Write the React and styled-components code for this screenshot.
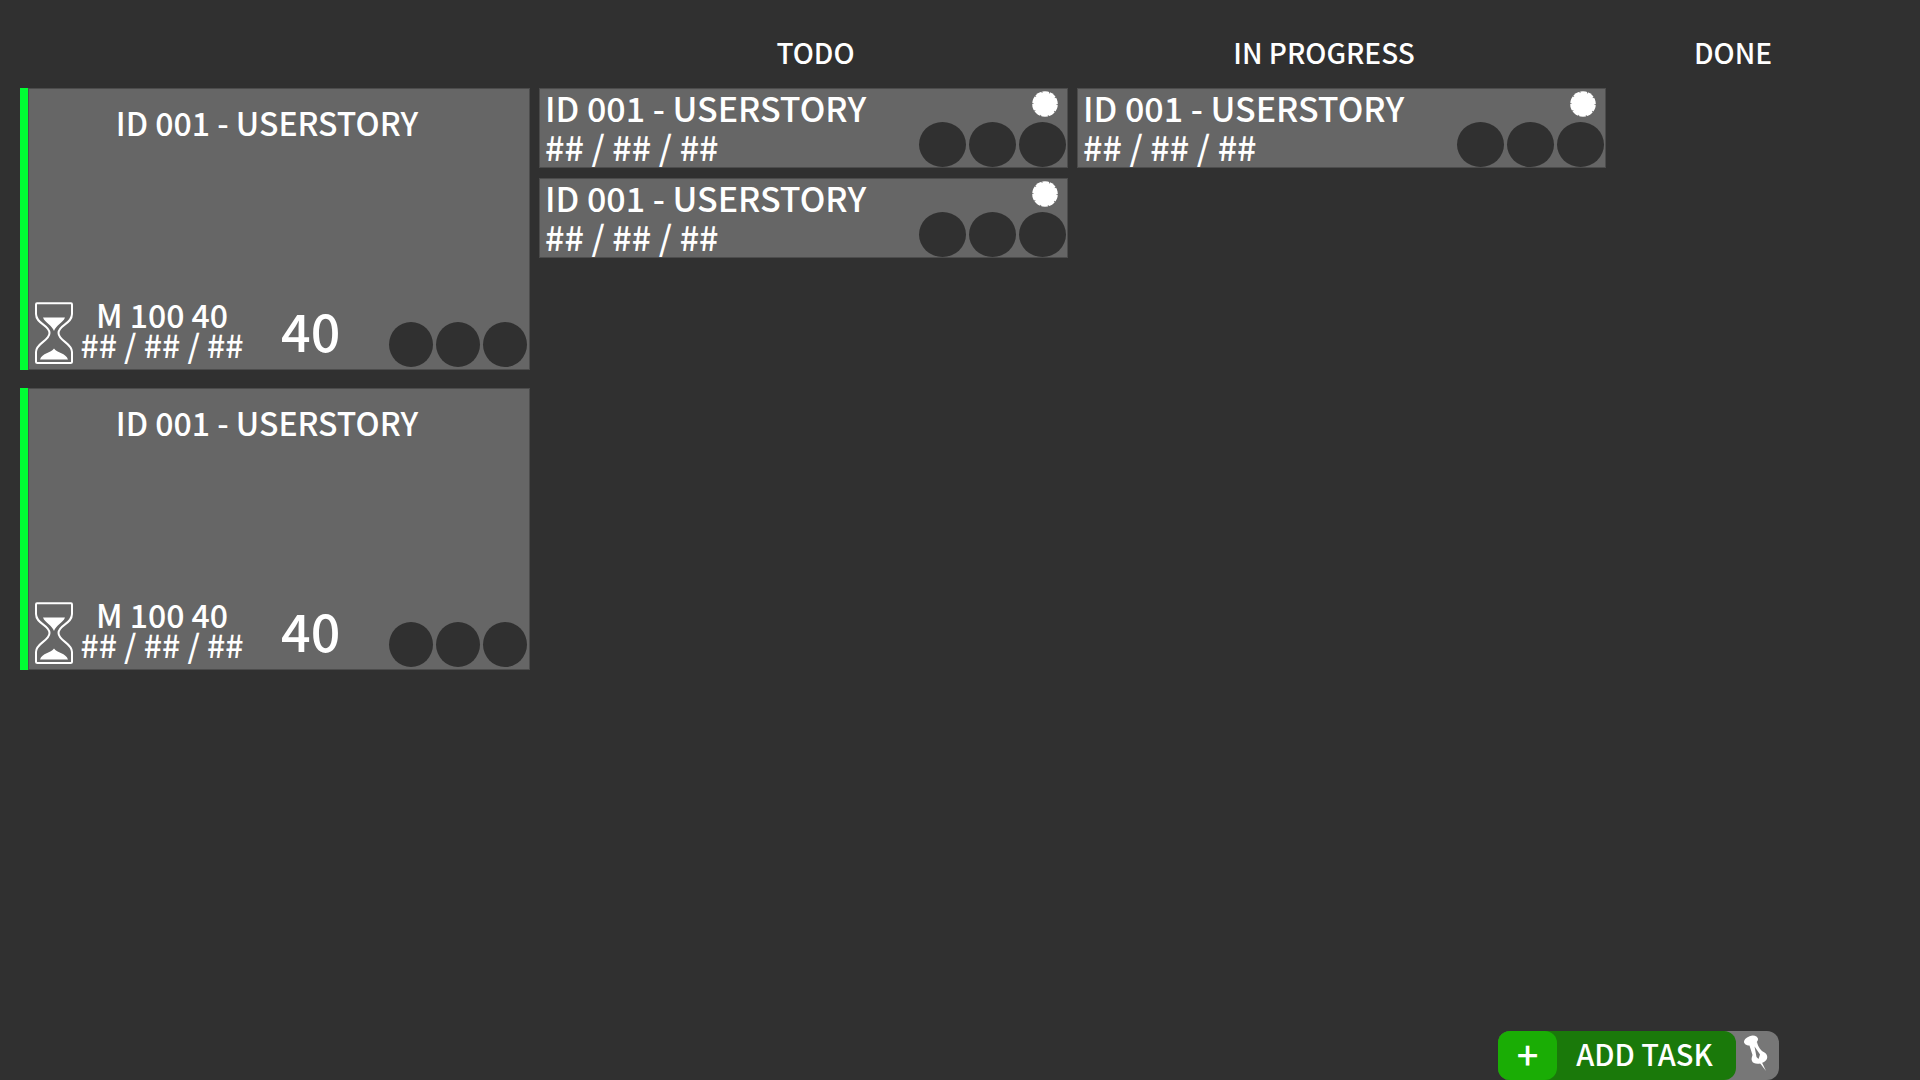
import React from "react";
import styled, { createGlobalStyle } from "styled-components";

const GlobalStyle = createGlobalStyle`
  *, *::before, *::after { box-sizing: border-box; }
  body {
    margin: 0;
    background: #303030;
    color: #fff;
    font-family: "Noto Sans CJK SC", "Open Sans", sans-serif;
    font-weight: 500;
  }
  h2, h3, p { margin: 0; font-size: inherit; font-weight: inherit; }
`;

const Page = styled.div`
  min-height: 100vh;
  display: flex;
  flex-direction: column;
`;

const BoardHeader = styled.header`
  display: grid;
  grid-template-columns: 538fr 555fr 462fr 356fr;
  height: 88px;
  padding: 32px 9px 0 0;
`;

const ColumnTitle = styled.h2`
  font-size: 28px;
  line-height: 40px;
  text-align: center;
`;

const Board = styled.main`
  flex: 1;
  display: grid;
  grid-template-columns: 510fr 529fr 529fr 305fr;
  column-gap: 9px;
  padding-left: 20px;
`;

const Column = styled.section`
  display: flex;
  flex-direction: column;
  gap: ${(p) => p.$gap}px;
`;

const StoryCard = styled.article`
  display: flex;
  flex-direction: column;
  justify-content: space-between;
  height: 282px;
  padding: 8px 3px 3px 7px;
  background: #666;
  border-left: 8px solid #00ff33;
  box-shadow: inset 0 0 0 1px #4c4c4c;
`;

const StoryTitle = styled.h3`
  padding-right: 28px;
  font-size: 32px;
  line-height: 52px;
  text-align: center;
`;

const StoryFooter = styled.div`
  display: flex;
  align-items: flex-end;
`;

const StoryIcon = styled.span`
  display: flex;
  padding-bottom: 3px;
`;

const StoryMeta = styled.div`
  width: 172px;
  margin-left: 3px;
  padding-bottom: 8px;
  font-size: 32px;
  line-height: 30px;
  text-align: center;
  white-space: nowrap;
`;

const Points = styled.p`
  flex: 1;
  padding: 0 0 3px 33px;
  font-size: 52px;
  line-height: 68px;
`;

const Avatars = styled.div`
  display: flex;
  gap: 3px;
`;

const Avatar = styled.span`
  width: ${(p) => p.$width}px;
  height: 45px;
  border-radius: 50%;
  background: #303030;
`;

const TaskCard = styled.article`
  display: flex;
  justify-content: space-between;
  height: 80px;
  padding: 0 2px 1px 6px;
  background: #666;
  box-shadow: inset 0 0 0 1px #4c4c4c;
`;

const TaskText = styled.div`
  font-size: 34px;
  line-height: 39px;
  white-space: nowrap;
`;

const TaskSide = styled.div`
  display: flex;
  flex-direction: column;
  align-items: flex-end;
  justify-content: space-between;
  padding-top: 3px;
`;

const StatusDot = styled.svg`
  width: 26px;
  height: 26px;
  margin-right: 8px;
`;

const Toolbar = styled.footer`
  display: flex;
  justify-content: flex-end;
  padding-right: 141px;
`;

const ToolbarGroup = styled.div`
  display: flex;
  height: 49px;
  border-radius: 12px;
  background: #777;
`;

const AddGroup = styled.div`
  display: flex;
  border-radius: 12px;
  background: #1a790a;
`;

const ToolButton = styled.button`
  display: flex;
  align-items: center;
  justify-content: center;
  width: ${(p) => p.$width}px;
  padding: 0 4px 6px 0;
  border: 0;
  border-radius: 12px;
  background: ${(p) => p.$color || "transparent"};
  color: #fff;
  font: inherit;
  font-size: 29px;
  line-height: 40px;
  cursor: pointer;
`;

const AddButton = styled(ToolButton)`
  padding: 0 0 4px;
  font-size: 38px;
`;

const Hourglass = () => (
  <svg width="38" height="62" viewBox="0 0 38 62" aria-hidden="true">
    <path
      d="M2 1.2H36Q37 1.2 37 2.4V12C37 22 23.5 23 23.5 31S37 41 37 50V59.5Q37 61 35.5 61H2.5Q1 61 1 59.5V50C1 41 14.500 39 14.500 31S1 22 1 12V2.400Q1 1.200 2 1.200Z"
      fill="none"
      stroke="#fff"
      strokeWidth="2"
    />
    <path d="M8 15.500H30C28 21 21 23 19 29C17 23 10 21 8 15.500Z" fill="#fff" />
    <path d="M5 57.500C7 51 16 51 19 46.500C22 51 31 51 33 57.500Z" fill="#fff" />
  </svg>
);

const Pin = () => (
  <svg width="26" height="40" viewBox="0 0 26 40" aria-hidden="true">
    <ellipse cx="8" cy="7.500" rx="7.200" ry="4.600" transform="rotate(-18 8 7.500)" fill="#fff" />
    <path d="M6 11L14 9C15 14 18 18 21.500 19.500C25.500 22 25 27 21 29C16 32 10 31 9 28C8 26 9 24 9.500 22Z" fill="#fff" />
    <path d="M11.500 13.500L17 21.500L15.500 26L13.500 24Z" fill="#777" />
    <path d="M16.500 29.500L18.500 28.500L23 38Z" fill="#fff" />
  </svg>
);

const STORIES = [
  { id: 1, title: "ID 001 - USERSTORY", size: "M 100 40", date: "## / ## / ##", points: 40 },
  { id: 2, title: "ID 001 - USERSTORY", size: "M 100 40", date: "## / ## / ##", points: 40 },
];

const TODO = [
  { id: 1, title: "ID 001 - USERSTORY", date: "## / ## / ##" },
  { id: 2, title: "ID 001 - USERSTORY", date: "## / ## / ##" },
];

const IN_PROGRESS = [{ id: 3, title: "ID 001 - USERSTORY", date: "## / ## / ##" }];

const AvatarRow = ({ width }) => (
  <Avatars>
    {[0, 1, 2].map((n) => (
      <Avatar key={n} $width={width} />
    ))}
  </Avatars>
);

const Story = ({ story }) => (
  <StoryCard>
    <StoryTitle>{story.title}</StoryTitle>
    <StoryFooter>
      <StoryIcon>
        <Hourglass />
      </StoryIcon>
      <StoryMeta>
        <p>{story.size}</p>
        <p>{story.date}</p>
      </StoryMeta>
      <Points>{story.points}</Points>
      <AvatarRow width={44} />
    </StoryFooter>
  </StoryCard>
);

const Task = ({ task }) => (
  <TaskCard>
    <TaskText>
      <h3>{task.title}</h3>
      <p>{task.date}</p>
    </TaskText>
    <TaskSide>
      <StatusDot viewBox="0 0 26 26" aria-hidden="true">
        <circle cx="13" cy="13" r="12.800" fill="#fff" />
        <circle
          cx="13"
          cy="13"
          r="12.500"
          fill="none"
          stroke="#666"
          strokeWidth="2"
          strokeDasharray="0.800 7.054"
        />
      </StatusDot>
      <AvatarRow width={47} />
    </TaskSide>
  </TaskCard>
);

export default function App() {
  return (
    <Page>
      <GlobalStyle />
      <BoardHeader>
        <span />
        <ColumnTitle>TODO</ColumnTitle>
        <ColumnTitle>IN PROGRESS</ColumnTitle>
        <ColumnTitle>DONE</ColumnTitle>
      </BoardHeader>
      <Board>
        <Column $gap={18}>
          {STORIES.map((s) => (
            <Story key={s.id} story={s} />
          ))}
        </Column>
        <Column $gap={10}>
          {TODO.map((t) => (
            <Task key={t.id} task={t} />
          ))}
        </Column>
        <Column $gap={10}>
          {IN_PROGRESS.map((t) => (
            <Task key={t.id} task={t} />
          ))}
        </Column>
        <Column $gap={10} />
      </Board>
      <Toolbar>
        <ToolbarGroup>
          <AddGroup>
            <AddButton $width={59} $color="#1aad05" aria-label="Add">
              +
            </AddButton>
            <ToolButton $width={179}>ADD TASK</ToolButton>
          </AddGroup>
          <ToolButton $width={43} aria-label="Pin">
            <Pin />
          </ToolButton>
        </ToolbarGroup>
      </Toolbar>
    </Page>
  );
}
